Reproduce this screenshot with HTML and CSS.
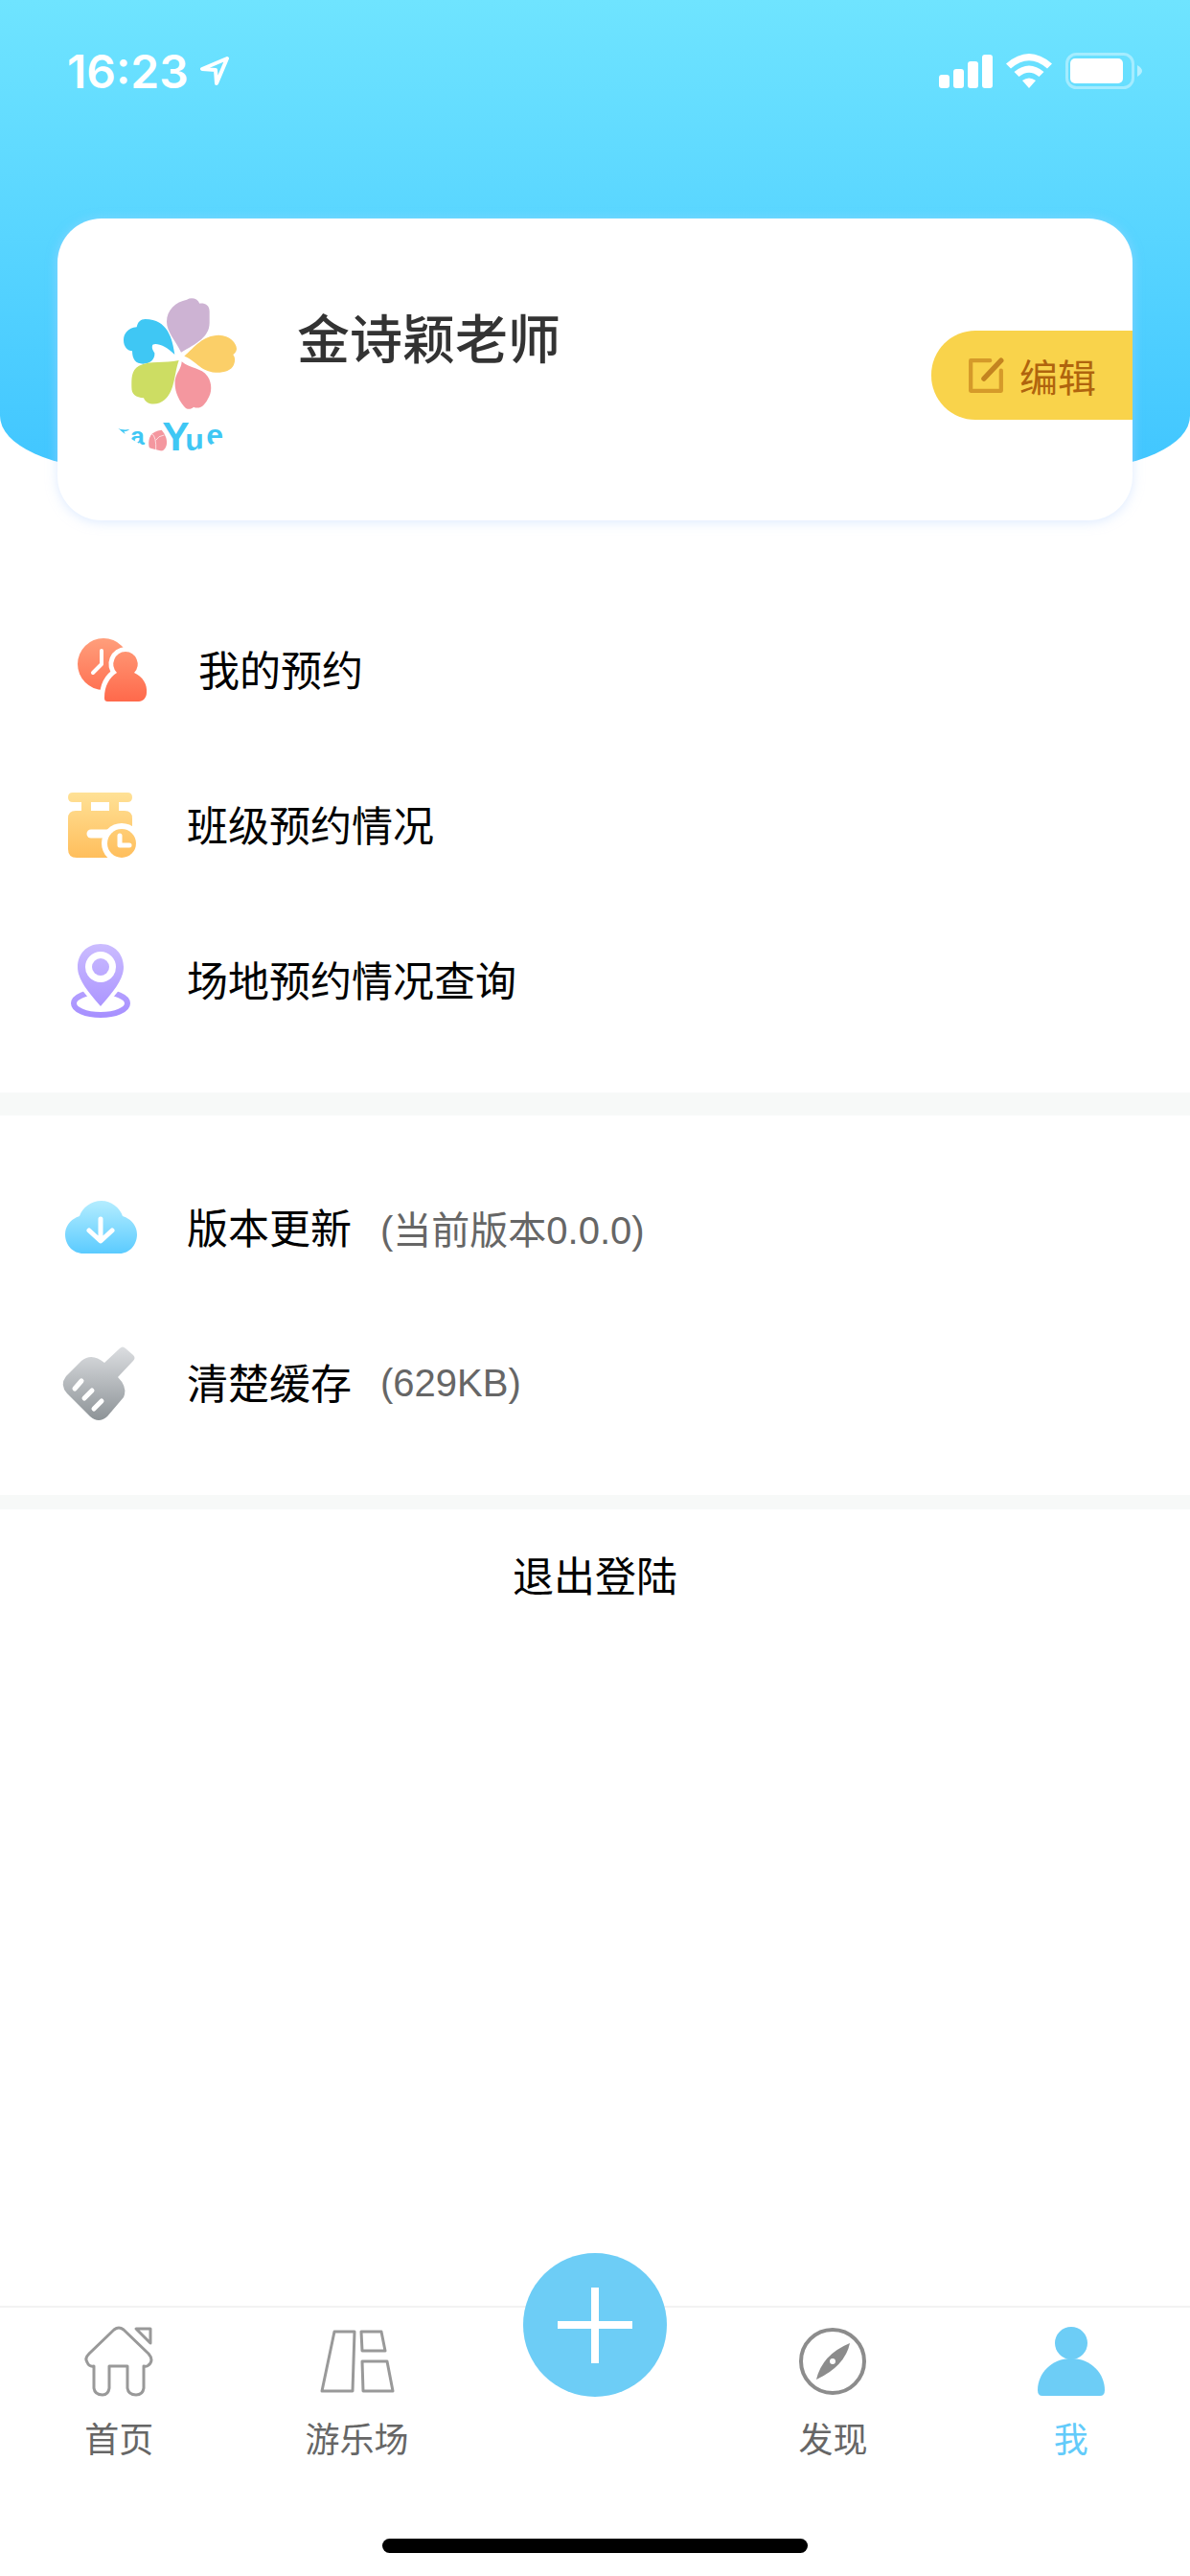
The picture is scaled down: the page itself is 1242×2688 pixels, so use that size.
FILE: index.html
```html
<!DOCTYPE html>
<html lang="zh-CN">
  <head>
    <meta charset="UTF-8" />
    <meta name="viewport" content="width=device-width, initial-scale=1.0" />
    <title>我</title>
    <link rel="stylesheet" href="styles.css">
  </head>
  <body>
    <div class="page">
      <header class="header">
        <div class="status-bar">
          <div class="status-left">
            <span class="time">16:23</span>
            <svg class="icon-location" viewBox="0 0 30 30">
              <path d="M28 2 L2 13 L16 14 L17 28 Z" />
            </svg>
          </div>
          <div class="status-right">
            <svg class="icon-signal" viewBox="0 0 56 35">
              <rect x="0" y="21" width="11" height="14" rx="3" />
              <rect x="15" y="15" width="11" height="20" rx="3" />
              <rect x="30" y="7" width="11" height="28" rx="3" />
              <rect x="45" y="0" width="11" height="35" rx="3" />
            </svg>
            <svg class="icon-wifi" viewBox="0 0 48 36">
              <path d="M0 10.500 Q24 -10.500 48 10.500 L43 15.500 Q24 -1 5 15.500 Z" />
              <path d="M8.500 19 Q24 6 39.500 19 L34.500 24 Q24 15.500 13.500 24 Z" />
              <path d="M17 28 Q24 23 31 28 L24 36 Z" />
            </svg>
            <svg class="icon-battery" viewBox="0 0 80 38">
              <rect class="battery-case" x="1.500" y="1.500" width="69" height="35" rx="10" />
              <rect x="5" y="6" width="55" height="26" rx="5" />
              <path class="battery-tip" d="M75 13 Q80 16 80 19 Q80 22 75 25 Z" />
            </svg>
          </div>
        </div>
      </header>

      <!-- Profile card -->
      <section class="profile-card">
        <svg class="avatar" viewBox="-6 30 516 516">
          <path fill="#cdb3d3" d="M267 233 C250 195 222 170 222 137 C222 100 250 75 285 68 C300 60 318 64 325 80 C340 78 356 84 356 105 L356 140 C356 185 315 205 267 233 Z" />
          <path fill="#3fc7f4" d="M247 240 C240 190 225 130 155 129 C140 129 131 138 128 154 C100 157 87 175 87 195 C87 216 100 228 114 229 C114 255 125 269 148 269 C170 269 186 255 184 235 C178 225 174 218 178 209 C190 202 220 212 247 240 Z" />
          <path fill="#fbcf68" d="M277 245 C310 215 335 180 385 179 C420 179 441 205 441 222 C440 232 435 236 430 240 C437 250 437 260 432 272 C424 290 400 297 375 296 C325 292 310 255 277 245 Z" />
          <path fill="#f4979f" d="M269 262 C295 285 330 280 350 308 C365 330 364 360 350 380 C340 400 325 412 306 404 C298 413 284 413 276 402 C255 375 246 350 248 320 C253 295 268 285 269 262 Z" />
          <path fill="#cddd63" d="M260 258 C245 300 248 355 215 382 C195 400 158 400 150 376 C125 374 112 365 112 342 C112 315 110 290 135 275 C170 258 215 268 260 258 Z" />
          <path fill="#3fc7f4" d="M66 470 Q84 478 106 474 Q98 482 88 480 L92 490 Z" />
          <g class="avatar-text">
            <text x="108" y="522">a</text>
            <text class="big" x="208" y="540">Y</text>
            <text class="mid" x="280" y="540">u</text>
            <text class="mid" x="346" y="524">e</text>
          </g>
          <path fill="#f4979f" d="M206 476 C172 480 164 500 166 524 C168 544 186 546 200 544 C220 540 226 520 220 500 C216 490 212 482 206 476 Z" />
          <path fill="none" stroke="#fff" stroke-width="2" d="M176 488 Q190 498 188 540 M188 508 Q196 494 214 492" />
        </svg>
        <h1 class="name">金诗颖老师</h1>
        <button type="button" class="edit-btn">
          <svg class="icon-edit" viewBox="0 0 36 36">
            <path class="edit-box" d="M22 3 H3 V33 H33 V13" />
            <path class="edit-pen" d="M16 21 L33 3" />
          </svg>
          编辑
        </button>
      </section>

      <main>
        <ul class="menu">
          <li>
            <a href="#" class="menu-item indent">
              <svg class="menu-icon" viewBox="0 0 90 90">
                <defs>
                  <linearGradient id="orange" gradientUnits="userSpaceOnUse" x1="0" y1="11" x2="0" y2="78">
                    <stop offset="0" stop-color="#ff9f7c" />
                    <stop offset="1" stop-color="#ff694b" />
                  </linearGradient>
                </defs>
                <circle cx="36" cy="39" r="27" fill="url(#orange)" />
                <path class="cut thin" d="M34 25 V39 L25 48" />
                <path class="outline" d="M59 26 a13 13 0 0 1 9 22 C77 52 82 60 81 69 C81 74 77 78 73 78 H41 C38 78 37 77 37 74 C37 62 42 53 50 48 A13 13 0 0 1 59 26 Z" />
                <path fill="url(#orange)" d="M59 26 a13 13 0 0 1 9 22 C77 52 82 60 81 69 C81 74 77 78 73 78 H41 C38 78 37 77 37 74 C37 62 42 53 50 48 A13 13 0 0 1 59 26 Z" />
              </svg>
              <span class="label">我的预约</span>
            </a>
          </li>
          <li>
            <a href="#" class="menu-item">
              <svg class="menu-icon" viewBox="0 0 90 90">
                <defs>
                  <linearGradient id="yellow" gradientUnits="userSpaceOnUse" x1="0" y1="11" x2="0" y2="79">
                    <stop offset="0" stop-color="#ffe196" />
                    <stop offset="1" stop-color="#ffbe5c" />
                  </linearGradient>
                </defs>
                <path fill="url(#yellow)" d="M16 11 H73 Q78 11 78 16 Q78 21 73 21 H64 V30 H70 Q78 30 78 38 V70 Q78 79 70 79 H20 Q11 79 11 70 V38 Q11 30 19 30 H25 V21 H16 Q11 21 11 16 Q11 11 16 11 Z M35 21 V30 H54 V21 Z" />
                <path class="cut thick" d="M35 54 H56" />
                <circle cx="67" cy="64" r="21" fill="#fff" />
                <circle cx="67" cy="64" r="15" fill="url(#yellow)" />
                <path class="cut" d="M65 56 V66 H75" />
              </svg>
              <span class="label">班级预约情况</span>
            </a>
          </li>
          <li>
            <a href="#" class="menu-item">
              <svg class="menu-icon" viewBox="0 0 90 90">
                <defs>
                  <linearGradient id="purple" gradientUnits="userSpaceOnUse" x1="0" y1="7" x2="0" y2="84">
                    <stop offset="0" stop-color="#cbbcff" />
                    <stop offset="1" stop-color="#a68fff" />
                  </linearGradient>
                </defs>
                <ellipse cx="45" cy="69" rx="28" ry="12" fill="none" stroke="url(#purple)" stroke-width="6" />
                <path class="outline" d="M45 8 C60 8 69 18 69 31 C69 46 55 58 45 70 C35 58 21 46 21 31 C21 18 30 8 45 8 Z" />
                <path fill="url(#purple)" d="M45 7 C60 7 69 18 69 31 C69 46 55 60 45 72 C35 60 21 46 21 31 C21 18 30 7 45 7 Z" />
                <circle cx="45" cy="31" r="16" fill="#fff" />
                <circle cx="45" cy="31" r="9" fill="url(#purple)" />
              </svg>
              <span class="label">场地预约情况查询</span>
            </a>
          </li>
        </ul>

        <ul class="menu settings">
          <li>
            <a href="#" class="menu-item">
              <svg class="menu-icon" viewBox="0 0 90 90">
                <defs>
                  <linearGradient id="blue" gradientUnits="userSpaceOnUse" x1="0" y1="17" x2="0" y2="72">
                    <stop offset="0" stop-color="#b4edff" />
                    <stop offset="1" stop-color="#5bcbff" />
                  </linearGradient>
                </defs>
                <path fill="url(#blue)" d="M46 17 C56 17 65 24 68 33 C77 36 83 43 83 52 C83 63 75 72 65 72 H27 C16 72 8 63 8 52 C8 43 14 36 23 33 C26 24 35 17 46 17 Z" />
                <path class="cut" d="M45 36 V58 M33 48 L45 59 L57 48" />
              </svg>
              <span class="label">版本更新</span>
              <span class="note">(当前版本0.0.0)</span>
            </a>
          </li>
          <li>
            <a href="#" class="menu-item">
              <svg class="menu-icon" viewBox="0 0 90 90">
                <defs>
                  <linearGradient id="gray" gradientUnits="userSpaceOnUse" x1="0" y1="7" x2="0" y2="84">
                    <stop offset="0" stop-color="#dcdee1" />
                    <stop offset="1" stop-color="#8d9397" />
                  </linearGradient>
                </defs>
                <path fill="url(#gray)" d="M65 9 Q68 6 71 9 L79 16 Q82 19 79 22 L63 39 Q72 48 70 57 L69 60 L52 80 Q43 88 34 80 L10 56 Q2 47 9 38 L25 22 Q36 13 49 24 Z" />
                <path class="cut" d="M25 43 L18 51 M36 53 L28 61 M46 64 L38 72" />
              </svg>
              <span class="label">清楚缓存</span>
              <span class="note">(629KB)</span>
            </a>
          </li>
        </ul>

        <button type="button" class="logout">退出登陆</button>
      </main>

      <footer class="footer">
        <nav class="tab-bar">
          <a href="#" class="tab">
            <svg class="tab-icon" viewBox="0 0 74 74">
              <path d="M32 4 Q37 0 42 4 L68 29 Q74 36 68 41 Q66 43 63 42 V65 Q62 72 55 72 Q47 72 46 65 V42 H27 V65 Q26 72 20 72 Q12 72 11 65 V42 Q6 43 4 38 Q1 34 6 29 Z" />
              <path d="M55 3 H70 V18 Z" />
            </svg>
            首页
          </a>
          <a href="#" class="tab">
            <svg class="tab-icon" viewBox="0 0 74 74">
              <path d="M13 6 H34 L32 68 H0 Z" />
              <path d="M41 6 H62 L66 26 H42 Z" />
              <path d="M42 37 H68 L74 68 H43 Z" />
            </svg>
            游乐场
          </a>
          <div class="tab">
            <button type="button" class="add-btn" aria-label="添加">
              <svg viewBox="0 0 150 150">
                <path d="M75 36 V115 M36 75 H114" />
              </svg>
            </button>
          </div>
          <a href="#" class="tab">
            <svg class="tab-icon compass" viewBox="0 0 74 74">
              <circle cx="37" cy="37" r="33" />
              <path class="needle" d="M55 18 Q50 42 20 56 Q26 30 55 18 Z" />
              <circle class="hub" cx="37" cy="37" r="3" />
            </svg>
            发现
          </a>
          <a href="#" class="tab active">
            <svg class="tab-icon" viewBox="0 0 74 74">
              <circle cx="37" cy="18" r="17" />
              <path d="M37 34 C58 34 72 50 72 67 Q72 73 67 73 H7 Q2 73 2 67 C2 50 16 34 37 34 Z" />
            </svg>
            我
          </a>
        </nav>
        <div class="home-indicator"></div>
      </footer>
    </div>
  </body>
</html>
```
FILE: styles.css
```css
/* General page styling */
* {
  box-sizing: border-box;
}

body {
  font-family: Roboto, "Noto Sans CJK SC", sans-serif;
  background-color: #fff;
  color: #000;
  margin: 0;
}

a {
  color: inherit;
  text-decoration: none;
}

button {
  border: none;
  padding: 0;
  background: none;
  font-family: inherit;
  cursor: pointer;
}

svg {
  display: block;
  flex-shrink: 0;
}

.page {
  display: flex;
  flex-direction: column;
  min-height: 100vh;
}

/* Header and status bar */
.header {
  height: 490px;
  background: linear-gradient(#6fe4ff, #41c6ff);
  border-radius: 0 0 124px 124px / 0 0 56px 56px;
}

.status-bar {
  display: flex;
  justify-content: space-between;
  align-items: center;
  height: 148px;
  padding: 0 50px 0 70px;
}

.status-left,
.status-right {
  display: flex;
  align-items: center;
  gap: 14px;
}

.status-left {
  gap: 12px;
}

.time {
  font-family: Inter, sans-serif;
  font-size: 48px;
  font-weight: 600;
  color: #fff;
}

.icon-location {
  width: 30px;
  height: 30px;
  fill: none;
  stroke: #fff;
  stroke-width: 4;
  stroke-linejoin: round;
}

.status-right {
  fill: #fff;
}

.icon-signal {
  width: 56px;
  height: 35px;
}

.icon-wifi {
  width: 48px;
  height: 36px;
}

.icon-battery {
  width: 80px;
  height: 38px;
}

.battery-case {
  fill: none;
  stroke: #fff;
  stroke-width: 3;
  opacity: 0.4;
}

.battery-tip {
  opacity: 0.5;
}

/* Profile card */
.profile-card {
  display: flex;
  align-items: center;
  height: 315px;
  margin: -262px 60px 0;
  padding-left: 38px;
  background: #fff;
  border-radius: 46px;
  box-shadow: 0 2px 12px rgba(190, 215, 255, 0.5);
}

.avatar {
  width: 172px;
  height: 172px;
  border-radius: 50%;
  overflow: hidden;
}

.avatar-text {
  font-family: "Liberation Sans", sans-serif;
  font-size: 80px;
  font-weight: bold;
  fill: #3fc7f4;
}

.avatar-text .mid {
  font-size: 96px;
}

.avatar-text .big {
  font-size: 128px;
}

.name {
  align-self: flex-start;
  margin: 90px 0 0 40px;
  font-size: 55px;
  line-height: 74px;
  font-weight: 500;
  color: #333;
}

.edit-btn {
  display: flex;
  align-items: center;
  gap: 16px;
  height: 93px;
  margin: 12px 0 0 auto;
  padding: 0 38px;
  background: #f9d34b;
  border-radius: 46px 0 0 46px;
  font-size: 40px;
  color: #b0640e;
}

.icon-edit {
  width: 38px;
  height: 38px;
  fill: none;
  stroke-linecap: round;
  stroke-linejoin: round;
}

.edit-box {
  stroke: #d59a2a;
  stroke-width: 4;
}

.edit-pen {
  stroke: #c48420;
  stroke-width: 5;
}

/* Menu lists */
.menu {
  list-style: none;
  margin: 0;
  padding: 75px 0 36px;
  border-bottom: 24px solid #f7f9f8;
}

.menu.settings {
  border-bottom-width: 15px;
  padding-top: 36px;
}

.menu-item {
  display: flex;
  align-items: center;
  height: 162px;
  padding: 0 60px;
}

.menu-item.indent {
  padding-left: 72px;
}

.menu-icon {
  width: 90px;
  height: 90px;
  margin-right: 45px;
}

.label {
  padding-bottom: 4px;
  font-size: 43px;
}

.note {
  margin-left: 30px;
  font-family: "Liberation Sans", "Noto Sans CJK SC", sans-serif;
  font-size: 40px;
  color: #666;
}

.cut {
  fill: none;
  stroke: #fff;
  stroke-width: 5;
  stroke-linecap: round;
  stroke-linejoin: round;
}

.cut.thin {
  stroke-width: 4;
}

.cut.thick {
  stroke-width: 9;
}

.outline {
  fill: #fff;
  stroke: #fff;
  stroke-width: 10;
  stroke-linejoin: round;
}

.logout {
  display: block;
  width: 100%;
  height: 134px;
  font-size: 43px;
  color: #000;
}

/* Bottom tab bar */
.footer {
  margin-top: auto;
  border-top: 2px solid #f2f2f2;
}

.tab-bar {
  display: flex;
  height: 241px;
}

.tab {
  flex: 1;
  display: flex;
  flex-direction: column;
  align-items: center;
  gap: 20px;
  padding-top: 19px;
  font-size: 36px;
  line-height: 52px;
  color: #666;
}

.tab-icon {
  width: 74px;
  height: 74px;
  fill: none;
  stroke: #999;
  stroke-width: 3;
  stroke-linejoin: round;
  overflow: visible;
}

.compass {
  stroke: #8c8c8c;
  stroke-width: 4;
}

.compass .needle {
  fill: #8c8c8c;
  stroke: none;
}

.compass .hub {
  fill: #fff;
  stroke: none;
}

.tab.active {
  color: #62cbfa;
}

.tab.active .tab-icon {
  fill: #6dcdf6;
  stroke: none;
}

.add-btn {
  width: 150px;
  height: 150px;
  margin-top: -76px;
  background: #6dcdf6;
  border-radius: 50%;
}

.add-btn svg {
  stroke: #fff;
  stroke-width: 8;
}

.home-indicator {
  width: 444px;
  height: 15px;
  margin: 0 auto 24px;
  background: #000;
  border-radius: 8px;
}
```
